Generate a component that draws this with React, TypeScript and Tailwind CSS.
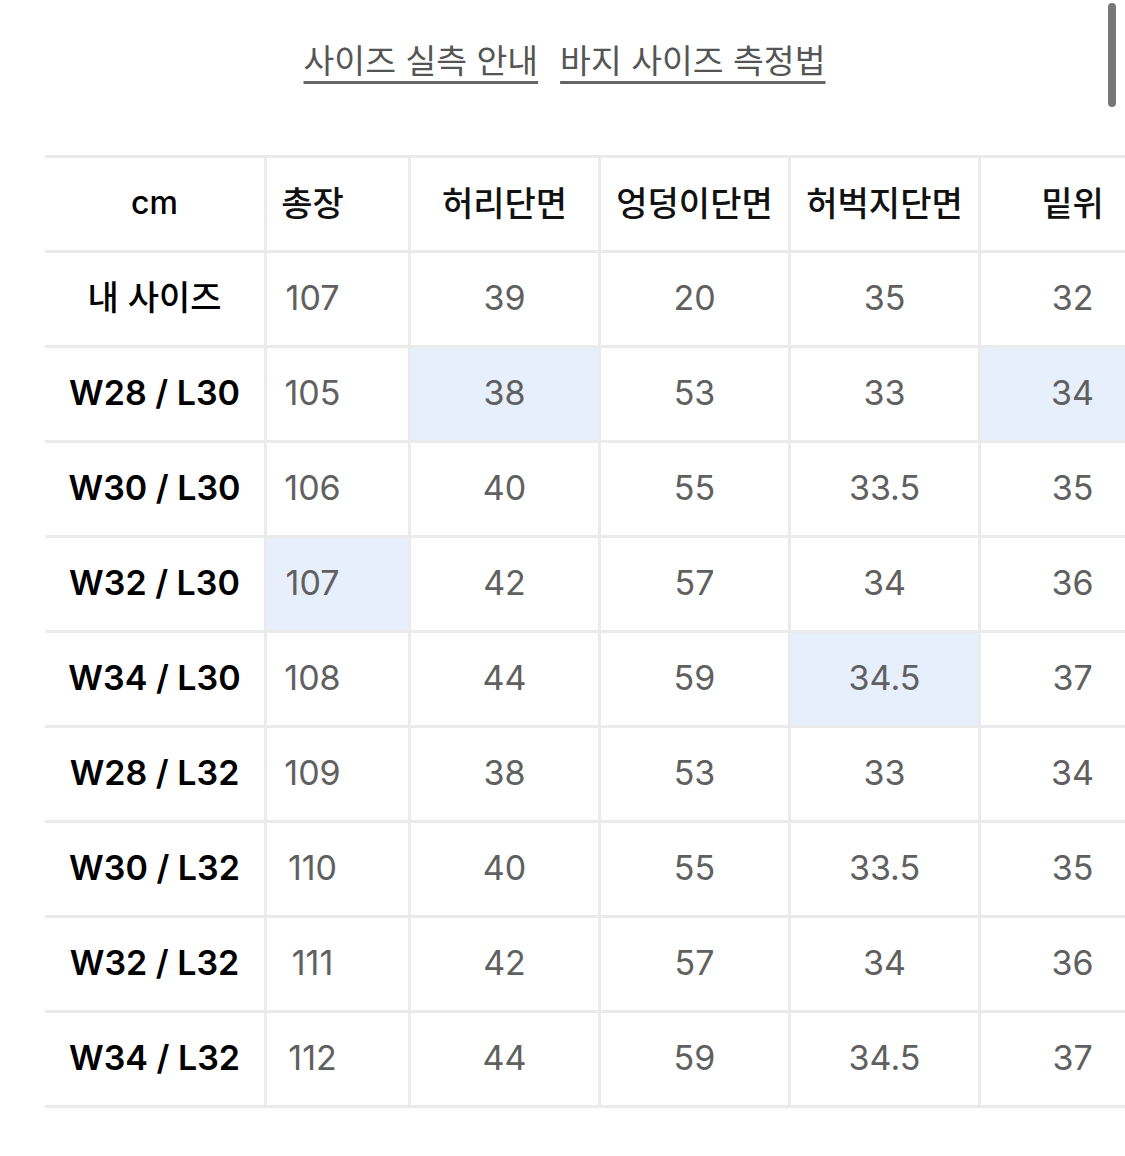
import React from 'react';

const font = { fontFamily: 'Inter, "Noto Sans CJK KR", sans-serif' };

const headers = ['총장', '허리단면', '엉덩이단면', '허벅지단면', '밑위'];

const rows: { label: string; values: string[]; hl?: number[] }[] = [
  { label: '내 사이즈', values: ['107', '39', '20', '35', '32'] },
  { label: 'W28 / L30', values: ['105', '38', '53', '33', '34'], hl: [1, 4] },
  { label: 'W30 / L30', values: ['106', '40', '55', '33.5', '35'] },
  { label: 'W32 / L30', values: ['107', '42', '57', '34', '36'], hl: [0] },
  { label: 'W34 / L30', values: ['108', '44', '59', '34.5', '37'], hl: [3] },
  { label: 'W28 / L32', values: ['109', '38', '53', '33', '34'] },
  { label: 'W30 / L32', values: ['110', '40', '55', '33.5', '35'] },
  { label: 'W32 / L32', values: ['111', '42', '57', '34', '36'] },
  { label: 'W34 / L32', values: ['112', '44', '59', '34.5', '37'] },
];

const colWidths = ['w-[144px]', 'w-[190px]', 'w-[190px]', 'w-[190px]', 'w-[186px]'];

const App = () => {
  return (
    <div className="relative w-[1125px] h-[1156px] overflow-hidden bg-white" style={font}>
      {/* scrollbar */}
      <div className="absolute right-[9px] top-[3px] w-[8px] h-[104px] rounded-full bg-[#777]" />

      {/* links */}
      <div className="flex justify-center gap-[22px] pt-[38px] pl-[4px]">
        <a className="text-[33.5px] leading-[46px] text-[#555] underline decoration-[3px] underline-offset-[8px] decoration-[#666]">
          사이즈 실측 안내
        </a>
        <a className="text-[33.5px] leading-[46px] text-[#555] underline decoration-[3px] underline-offset-[8px] decoration-[#666]">
          바지 사이즈 측정법
        </a>
      </div>

      {/* table */}
      <div className="pl-[45px] mt-[71px]">
        <div className="w-[1125px] border-b-[3px] border-[#ebebeb]">
          <div className="flex h-[95px] border-t-[3px] border-[#ebebeb]">
            <div className="w-[219px] shrink-0 flex items-center justify-center pb-[2px] text-[32px] font-medium text-black">
              cm
            </div>
            {headers.map((h, i) => (
              <div
                key={h}
                className={`${colWidths[i]} shrink-0 flex items-center justify-center pb-[2px] border-l-[3px] border-[#ebebeb] text-[34px] font-medium text-[#111] ${
                  i === 0 ? 'pr-[50px]' : ''
                }`}
              >
                {h}
              </div>
            ))}
          </div>
          {rows.map(row => (
            <div key={row.label} className="flex h-[95px] border-t-[3px] border-[#ebebeb]">
              <div
                className={`w-[219px] shrink-0 flex items-center justify-center pb-[4px] text-black ${
                  row.label === '내 사이즈' ? 'text-[34px] font-medium' : 'text-[34px] font-semibold'
                }`}
              >
                {row.label}
              </div>
              {row.values.map((v, i) => (
                <div
                  key={i}
                  className={`${colWidths[i]} shrink-0 flex items-center justify-center pb-[4px] border-l-[3px] border-[#ebebeb] text-[34px] text-[#606060] ${
                    i === 0 ? 'pr-[50px]' : ''
                  } ${row.hl?.includes(i) ? 'bg-[#e7eefc]' : ''}`}
                >
                  {v}
                </div>
              ))}
            </div>
          ))}
        </div>
      </div>
    </div>
  );
};

export default App;
